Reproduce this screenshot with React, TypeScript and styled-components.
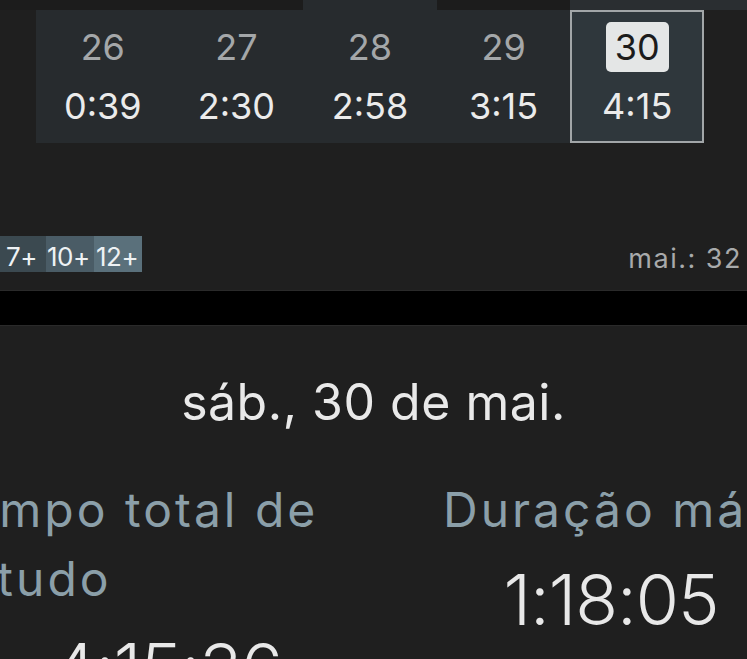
import * as React from 'react';
import styled, {createGlobalStyle} from 'styled-components';

const GlobalStyle = createGlobalStyle`
    html, body {
        margin: 0;
        padding: 0;
        background: #1f1f1f;
        overflow: hidden;
    }
    body {
        font-family: Inter, 'Noto Sans', sans-serif;
    }
`;

const Page = styled.div`
    display: flex;
    flex-direction: column;
    width: 747px;
    height: 659px;
    overflow: hidden;
    background: #1f1f1f;

    & > * {
        flex-shrink: 0;
    }
`;

const Strip = styled.div`
    display: flex;
    height: 10px;
`;

const StripPart = styled.div<{$w?: number; $tone: string}>`
    flex: ${(p) => (p.$w ? `0 0 ${p.$w}px` : '1')};
    background: ${(p) => p.$tone};
`;

const CalendarWrap = styled.div`
    padding-left: 36px;
`;

const Week = styled.div`
    width: 668px;
    height: 133px;
    display: grid;
    grid-template-columns: repeat(5, 1fr);
    background: #272b2e;
`;

const Day = styled.div<{$selected?: boolean}>`
    display: flex;
    flex-direction: column;
    align-items: center;
    padding-top: 12px;
    box-sizing: border-box;
    background: ${(p) => (p.$selected ? '#2f373c' : 'transparent')};
    box-shadow: ${(p) => (p.$selected ? 'inset 0 0 0 2px #a2a6a8' : 'none')};
`;

const DayNum = styled.div<{$selected?: boolean}>`
    display: flex;
    align-items: center;
    justify-content: center;
    height: 50px;
    min-width: 63px;
    border-radius: 5px;
    font-size: 36px;
    color: ${(p) => (p.$selected ? '#1c1c1c' : '#a4a7a9')};
    background: ${(p) => (p.$selected ? '#e4e6e6' : 'transparent')};
`;

const DayTime = styled.div`
    margin-top: 14px;
    line-height: 40px;
    font-size: 36px;
    color: #ebebeb;
`;

const LegendRow = styled.div`
    margin-top: 93px;
    height: 36px;
    display: flex;
    align-items: center;
    justify-content: space-between;
    padding-right: 5px;
`;

const Scale = styled.div`
    display: flex;
    height: 100%;
`;

const ScaleStep = styled.div<{$w: number; $tone: string; $pad: number}>`
    display: flex;
    align-items: center;
    width: ${(p) => p.$w}px;
    height: 100%;
    box-sizing: border-box;
    padding: 5px 0 0 ${(p) => p.$pad}px;
    background: ${(p) => p.$tone};
    font-size: 26px;
    letter-spacing: -0.5px;
    color: #eef2f4;
    white-space: nowrap;
`;

const MonthMax = styled.div`
    padding-top: 8px;
    font-size: 27px;
    letter-spacing: 1.5px;
    color: #a8aaab;
`;

const Band = styled.div`
    margin-top: 18px;
    height: 36px;
    background: #000;
    border-top: 1px solid #2a2a2a;
    border-bottom: 1px solid #2a2a2a;
    box-sizing: border-box;
`;

const DateTitle = styled.h2`
    margin: 46px 0 0;
    text-align: center;
    font-size: 50px;
    font-weight: 400;
    line-height: 60px;
    letter-spacing: 0.5px;
    color: #e9e9e9;
`;

const Stats = styled.div`
    display: flex;
    gap: 47px;
    margin-top: 43px;
    margin-left: -62px;
`;

const Stat = styled.div<{$w: number}>`
    flex: 0 0 ${(p) => p.$w}px;
    min-width: 0;
    display: flex;
    flex-direction: column;
`;

const StatLabel = styled.div<{$nowrap?: boolean}>`
    font-size: 48px;
    line-height: 69px;
    letter-spacing: 3px;
    color: #8b9fa9;
    white-space: ${(p) => (p.$nowrap ? 'nowrap' : 'normal')};
`;

const StatValue = styled.div`
    margin-top: 16px;
    text-align: center;
    font-size: 70px;
    font-weight: 300;
    line-height: 80px;
    letter-spacing: -1px;
    color: #e8e8e8;
`;

const days = [
    {day: 26, time: '0:39'},
    {day: 27, time: '2:30'},
    {day: 28, time: '2:58'},
    {day: 29, time: '3:15'},
    {day: 30, time: '4:15', selected: true},
];

const scale = [
    {label: '7+', w: 46, tone: '#3b4950', pad: 6},
    {label: '10+', w: 48, tone: '#4a5c66', pad: 1},
    {label: '12+', w: 48, tone: '#5a707b', pad: 2},
];

const App: React.FC = () => {
    return (
        <Page>
            <GlobalStyle />
            <Strip>
                <StripPart $w={303} $tone="#1c1c1c" />
                <StripPart $w={134} $tone="#272b2e" />
                <StripPart $w={133} $tone="#1c1c1c" />
                <StripPart $tone="#2a2e31" />
            </Strip>
            <CalendarWrap>
                <Week>
                    {days.map((d) => (
                        <Day key={d.day} $selected={d.selected}>
                            <DayNum $selected={d.selected}>{d.day}</DayNum>
                            <DayTime>{d.time}</DayTime>
                        </Day>
                    ))}
                </Week>
            </CalendarWrap>
            <LegendRow>
                <Scale>
                    {scale.map((s) => (
                        <ScaleStep key={s.label} $w={s.w} $tone={s.tone} $pad={s.pad}>
                            {s.label}
                        </ScaleStep>
                    ))}
                </Scale>
                <MonthMax>mai.: 32</MonthMax>
            </LegendRow>
            <Band />
            <DateTitle>sáb., 30 de mai.</DateTitle>
            <Stats>
                <Stat $w={458}>
                    <StatLabel>Tempo total de estudo</StatLabel>
                    <StatValue>4:15:36</StatValue>
                </Stat>
                <Stat $w={336}>
                    <StatLabel $nowrap>Duração máxima</StatLabel>
                    <StatValue>1:18:05</StatValue>
                </Stat>
            </Stats>
        </Page>
    );
};

export default App;
